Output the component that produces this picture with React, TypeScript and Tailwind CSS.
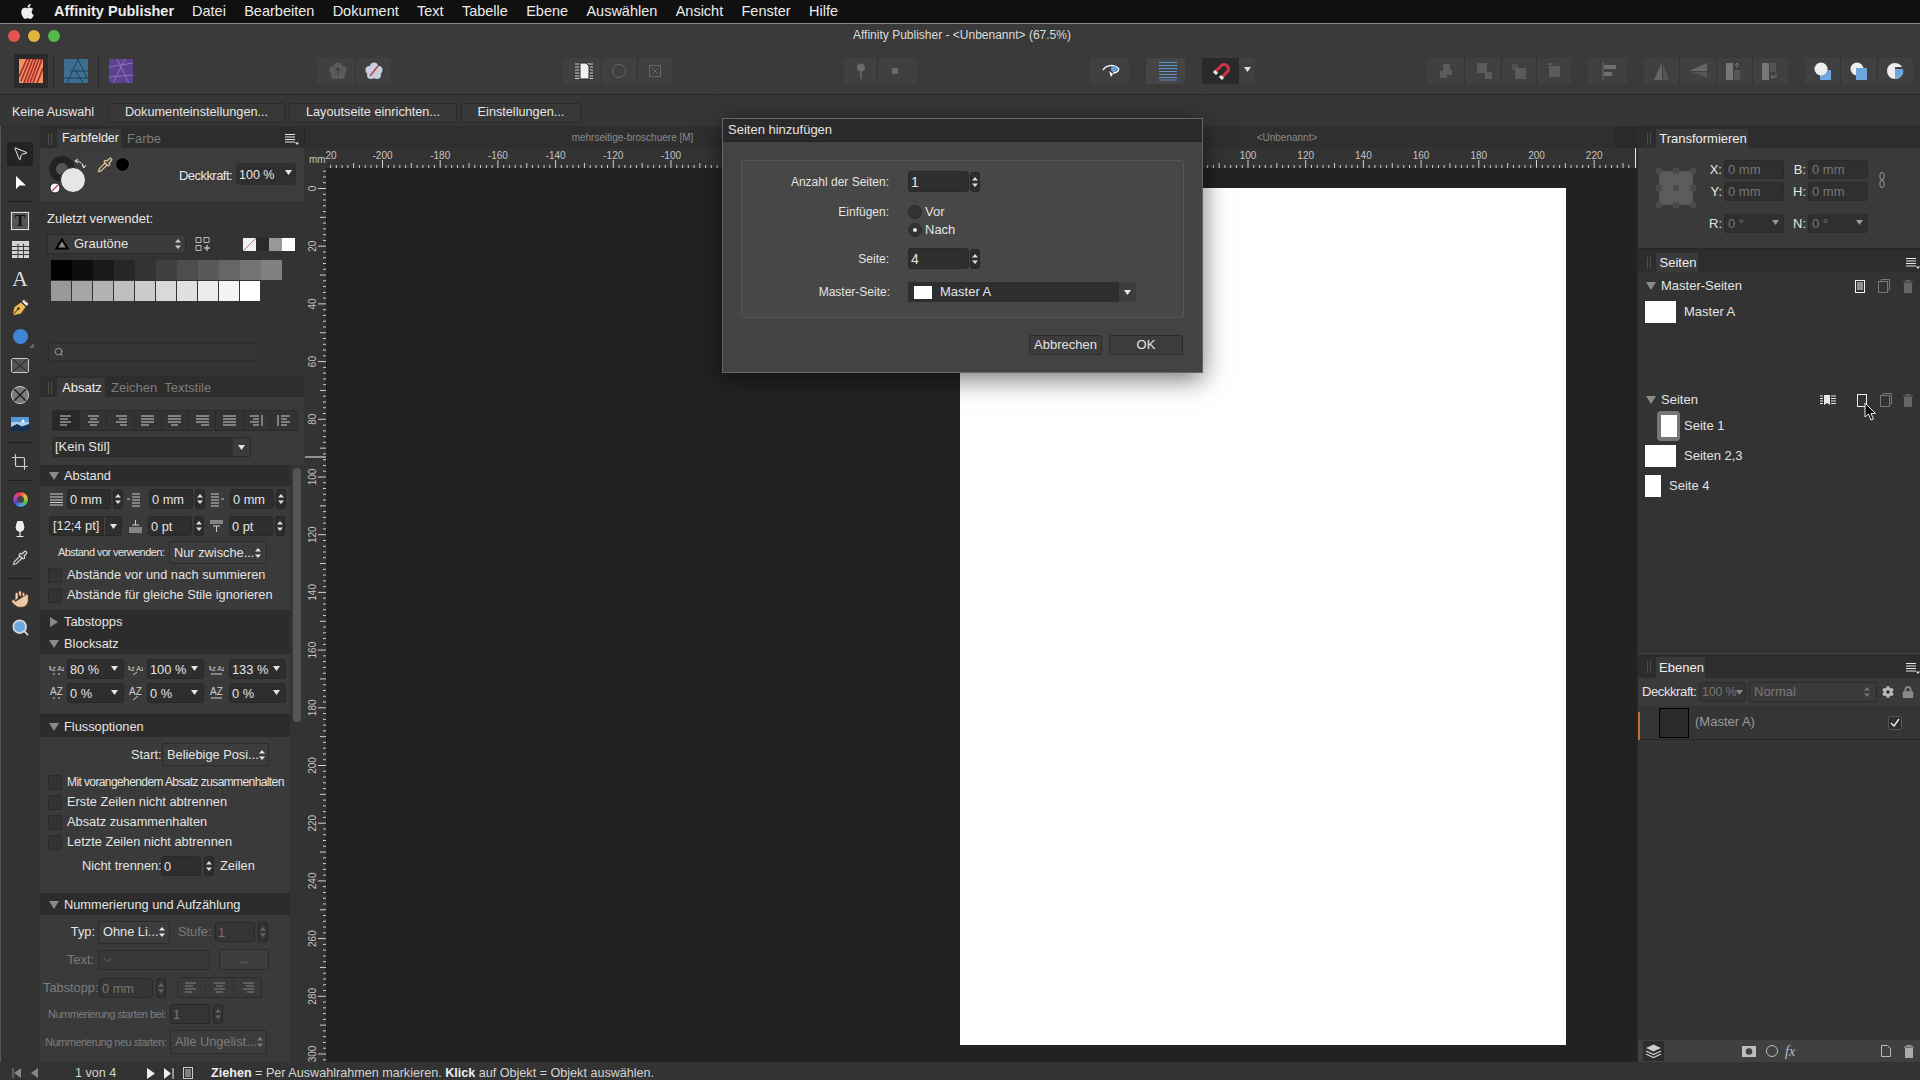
import React from "react";
import { FaApple, FaCog, FaLock } from "react-icons/fa";
import { Hand, Search, Wine, Pipette, Crop, MousePointer2 } from "lucide-react";

const Caret = ({ className = "" }: { className?: string }) => (
  <svg width="7" height="5" viewBox="0 0 7 5" className={`shrink-0 ${className}`}><path d="M0 0H7L3.5 5Z" fill="currentColor" /></svg>
);
const UpDown = ({ className = "" }: { className?: string }) => (
  <svg width="6" height="12" viewBox="0 0 6 12" className={`shrink-0 ${className}`}><path d="M0 4.5H6L3 1Z M0 7.5H6L3 11Z" fill="currentColor" /></svg>
);
const Stepper = ({ className = "", dim = false }: { className?: string; dim?: boolean }) => (
  <div className={`flex items-center justify-center w-[10px] h-[20px] rounded-[3px] bg-[#2c2c2c] border border-[#262626] shrink-0 ${dim ? "text-[#666]" : "text-[#ddd]"} ${className}`}><UpDown /></div>
);
const Field = ({ className = "", children, caret = false, dim = false }: { className?: string; children?: React.ReactNode; caret?: boolean; dim?: boolean }) => (
  <div className={`flex items-center justify-between h-[20px] rounded-[3px] bg-[#2e2e2e] border border-[#282828] pl-[2px] pr-[5px] pt-[2px] shrink-0 whitespace-nowrap ${dim ? "text-[#777]" : "text-[#e4e4e4]"} ${className}`}>
    <span>{children}</span>{caret && <Caret className="mb-[3px]" />}
  </div>
);
const Popup = ({ className = "", children, dim = false }: { className?: string; children?: React.ReactNode; dim?: boolean }) => (
  <div className={`flex items-center justify-between h-[23px] rounded-[2px] bg-[#3c3c3c] border border-[#2b2b2b] pl-[4px] pr-[5px] shrink-0 whitespace-nowrap ${dim ? "text-[#7c7c7c]" : "text-[#e4e4e4]"} ${className}`}>
    <span>{children}</span><UpDown />
  </div>
);
const Grip = ({ className = "" }: { className?: string }) => (
  <div className={`flex gap-[2px] h-[12px] shrink-0 ${className}`}><i className="block w-px bg-[#4d4d4d]" /><i className="block w-px bg-[#4d4d4d]" /></div>
);
const MenuIcon = ({ className = "" }: { className?: string }) => (
  <svg width="14" height="12" viewBox="0 0 14 12" className={`shrink-0 ${className}`}><path d="M0 1.5H10M0 4H10M0 6.5H10M0 9H10" stroke="#e8e8e8" strokeWidth="1" /><path d="M10 9.5H14L12 12Z" fill="#e8e8e8" /></svg>
);
const Head = ({ children, open = true, className = "" }: { children: React.ReactNode; open?: boolean; className?: string }) => (
  <div className={`flex items-center bg-[#2c2c2c] text-[12.8px] text-[#e4e4e4] shrink-0 ${className}`}>
    <svg width="10" height="10" viewBox="0 0 10 10" className="ml-[9px] mr-[5px] shrink-0"><path d={open ? "M0 1H10L5 9Z" : "M1 0V10L9 5Z"} fill="#8a8a8a" /></svg>
    {children}
  </div>
);
const Check = ({ children, tight = false }: { children: React.ReactNode; tight?: boolean }) => (
  <div className="flex items-center h-[20px]">
    <div className="w-[14px] h-[15px] ml-[8px] rounded-[2px] bg-[#333] border border-[#2a2a2a] shrink-0" />
    <span className={`ml-[5px] whitespace-nowrap ${tight ? "text-[12px] tracking-[-0.6px]" : "text-[12.8px]"}`}>{children}</span>
  </div>
);
const ParaIcon = ({ d, className = "" }: { d: string; className?: string }) => (
  <svg width="15" height="15" viewBox="0 0 15 15" className={`shrink-0 ${className}`}><path d={d} stroke="#cfcfcf" strokeWidth="1" fill="none" /></svg>
);
const AZ = ({ t, u, className = "" }: { t: string; u: string; className?: string }) => (
  <svg width="15" height="15" viewBox="0 0 15 15" className={`shrink-0 ${className}`}>
    <text x="7.5" y="9" textAnchor="middle" fontSize={t.length > 2 ? 7 : 10} fill="#cfcfcf" fontFamily="Liberation Sans">{t}</text>
    <path d={u} stroke="#cfcfcf" strokeWidth="1" fill="none" />
  </svg>
);

/* ---- tools ---- */
const ToolSep = ({ className = "" }: { className?: string }) => (
  <div className={`flex items-center justify-center ${className}`}><div className="w-[25px] h-px bg-[#1f1f1f]" /></div>
);
const Tool = ({ children, active = false }: { children: React.ReactNode; active?: boolean }) => (
  <div className="flex items-center justify-center h-[29px]">
    <div className={`flex items-center justify-center w-[26px] h-[24px] rounded-[3px] ${active ? "bg-[#232323]" : ""}`}>{children}</div>
  </div>
);

const Tools = () => (
  <div className="w-[40px] shrink-0 bg-[#333] pt-[13px] pr-[1px] flex flex-col border-l border-[#555]">
    <Tool active><MousePointer2 size={17} color="#e8e8e8" strokeWidth={1.4} fill="#2a2a2a" /></Tool>
    <Tool><svg width="13" height="16" viewBox="0 0 13 16"><path d="M2 1V14L5.5 10.5H12Z" fill="#fff" /></svg></Tool>
    <ToolSep className="h-[9px]" />
    <Tool><div className="w-[18px] h-[18px] border border-[#ddd] bg-[#555] flex items-center justify-center text-[16px] leading-none text-[#111] font-bold font-['Liberation_Serif',serif] outline outline-1 outline-[#444]">T</div></Tool>
    <Tool><svg width="17" height="17" viewBox="0 0 17 17"><rect x="0.5" y="0.5" width="16" height="16" fill="#cfcfcf" stroke="#ddd" /><path d="M0 5.5H17M0 9.500H17M0 13.500H17M6 3V17M11.500 3V17" stroke="#3a3a3a" /></svg></Tool>
    <Tool><span className="font-['Liberation_Serif',serif] text-[22px] leading-none text-[#ddd]">A</span></Tool>
    <Tool><svg width="20" height="20" viewBox="0 0 20 20"><path d="M2 18L4 9L11 4L16 9L11 16Z" fill="#e8b95c" stroke="#3a2a10" strokeWidth="0.800" /><path d="M2 18L8 11" stroke="#3a2a10" /><circle cx="8.500" cy="10.500" r="1.300" fill="#3a2a10" /><path d="M12 3.500L14 1.500L18.500 6L16.500 8Z" fill="#eee" /><path d="M14.500 2.500L16 4M16 1.500L17.500 3" stroke="#c23a4c" /></svg></Tool>
    <Tool>
      <div className="relative w-[22px] h-[22px] flex items-center justify-center">
        <div className="w-[15px] h-[15px] rounded-full bg-[#3f86d6]" />
        <svg width="5" height="5" viewBox="0 0 5 5" className="absolute right-[-3px] bottom-[0px]"><path d="M5 0V5H0Z" fill="#666" /></svg>
      </div>
    </Tool>
    <Tool><svg width="18" height="15" viewBox="0 0 18 15"><rect x="0.5" y="0.5" width="17" height="14" fill="#555" stroke="#ccc" /><path d="M0 0L18 15M18 0L0 15" stroke="#222" /></svg></Tool>
    <Tool><svg width="18" height="18" viewBox="0 0 18 18"><circle cx="9" cy="9" r="8.5" fill="#777" stroke="#ccc" /><path d="M3 3L15 15M15 3L3 15" stroke="#1d1d1d" strokeWidth="1.4" /></svg></Tool>
    <Tool><svg width="18" height="14" viewBox="0 0 18 14"><rect width="18" height="14" fill="#a8cdf0" /><rect width="18" height="5" fill="#5a97d8" /><path d="M0 10L6 7L11 9.500L18 7V14H0Z" fill="#17304f" /><circle cx="12" cy="4" r="1.500" fill="#fff" /></svg></Tool>
    <ToolSep className="h-[9px]" />
    <Tool><Crop size={18} color="#cfcfcf" strokeWidth={1.6} /></Tool>
    <ToolSep className="h-[9px]" />
    <Tool><div className="w-[17px] h-[17px] rounded-full bg-[conic-gradient(#e84040,#e8c040,#50c050,#40a0e0,#6040d0,#d040a0,#e84040)] border border-[#222] flex items-center justify-center"><i className="block w-[7px] h-[7px] rounded-full bg-[#444]" /></div></Tool>
    <Tool><Wine size={18} color="#ededed" fill="#ededed" strokeWidth={1.5} /></Tool>
    <Tool><Pipette size={16} color="#d5d5d5" strokeWidth={1.8} /></Tool>
    <ToolSep className="h-[12px]" />
    <Tool><Hand size={20} color="#4a3526" fill="#eec7a4" strokeWidth={1.2} /></Tool>
    <Tool><Search size={19} color="#d9d9d9" fill="#6aa8e0" strokeWidth={2.2} /></Tool>
  </div>
);

/* ---- left panel ---- */
const R1 = ["bg-[#000000]", "bg-[#0d0d0d]", "bg-[#1a1a1a]", "bg-[#262626]", "bg-[#333333]", "bg-[#404040]", "bg-[#4d4d4d]", "bg-[#595959]", "bg-[#666666]", "bg-[#737373]", "bg-[#808080]"];
const R2 = ["bg-[#999999]", "bg-[#a6a6a6]", "bg-[#b3b3b3]", "bg-[#bfbfbf]", "bg-[#cccccc]", "bg-[#d9d9d9]", "bg-[#e0e0e0]", "bg-[#ececec]", "bg-[#f4f4f4]", "bg-[#ffffff]"];

const AL = [
  "M1 3H12M1 6H9M1 9H12M1 12H8", "M2 3H13M4 6H11M2 9H13M4 12H11", "M3 3H14M6 6H14M3 9H14M7 12H14",
  "M1 3H14M1 6H14M1 9H14M1 12H9", "M1 3H14M1 6H14M1 9H14M4 12H11", "M1 3H14M1 6H14M1 9H14M6 12H14",
  "M1 3H14M1 6H14M1 9H14M1 12H14", "M1 3H10M4 6H10M1 9H10M4 12H10M13 2V13", "M5 3H14M5 6H11M5 9H14M5 12H11M2 2V13",
];

const LeftPanel = () => (
  <div className="w-[264px] shrink-0 flex flex-col bg-[#333]">
    <div className="h-[22px] pt-[3px] flex items-stretch bg-[#2d2d2d] text-[12.5px]">
      <Grip className="ml-[8px] mt-[4px]" />
      <div className="ml-[5px] w-[64px] pl-[3px] bg-[#3a3a3a] flex items-center justify-center text-[#eee]">Farbfelder</div>
      <div className="ml-[6px] flex items-center text-[#7c7c7c] text-[13px]">Farbe</div>
      <div className="flex-1 flex items-center justify-end pr-[5px]"><MenuIcon /></div>
    </div>
    <div className="h-[53px] bg-[#3c3c3c] flex items-start">
      <svg width="50" height="48" viewBox="0 0 50 48" className="ml-[8px] mt-[4px] shrink-0">
        <circle cx="14" cy="17" r="13" fill="#232323" /><circle cx="14" cy="17" r="6" fill="#555" />
        <circle cx="25" cy="28" r="12.5" fill="#e5e6e8" stroke="#2a2a2a" />
        <circle cx="7" cy="36" r="5" fill="#fff" stroke="#222" /><path d="M4 39L10 33" stroke="#c23a4c" strokeWidth="1.3" />
        <path d="M27 9A8 8 0 0 1 36 16M27 9l3-2M27 9l3 2M36 16l-2-3M36 16l2-3" stroke="#ddd" strokeWidth="1" fill="none" />
      </svg>
      <Pipette size={16} color="#d8c09a" strokeWidth={2} className="ml-[-1px] mt-[9px] shrink-0" />
      <div className="ml-[2px] mt-[9px] w-[15px] h-[15px] rounded-full bg-black border border-[#555] shrink-0" />
      <div className="ml-[49px] mt-[18px] text-[13px] tracking-[-0.55px] text-[#e8e8e8] w-[52px] whitespace-nowrap">Deckkraft:</div>
      <div className="ml-[5px] mt-[15px] w-[60px] h-[22px] rounded-[3px] bg-[#2f2f2f] flex items-center justify-between pl-[3px] pr-[4px] pt-[2px] text-[12.5px] text-[#e8e8e8]"><span>100 %</span><Caret className="mb-[6px]" /></div>
    </div>
    <div className="h-[175px] flex flex-col">
      <div className="ml-[7px] mt-[10px] h-[16px] leading-[16px] text-[13px] text-[#e6e6e6]">Zuletzt verwendet:</div>
      <div className="mt-[7px] flex items-center h-[20px]">
        <div className="ml-[7px] w-[139px] h-[20px] rounded-[2px] bg-[#3b3b3b] border border-[#2b2b2b] flex items-center justify-between pr-[4px]">
          <svg width="14" height="12" viewBox="0 0 14 12" className="ml-[7px]"><path d="M7 1.5L12.5 10.5H1.5Z" fill="#888" stroke="#000" strokeWidth="2" /></svg>
          <span className="ml-[5px] flex-1 text-[13px] text-[#e4e4e4]">Grautöne</span>
          <UpDown className="text-[#ccc]" />
        </div>
        <svg width="16" height="16" viewBox="0 0 16 16" className="ml-[9px]"><path d="M1 1.5H6V6.5H1Z M9 1.5H14V6.5H9Z M1 9.5H6V14.5H1Z" fill="none" stroke="#bbb" /><path d="M9 12H15M12 9V15" stroke="#bbb" strokeWidth="1.4" /></svg>
        <div className="ml-[32px] flex h-[13px]">
          <svg width="13" height="13" viewBox="0 0 13 13"><rect width="13" height="13" fill="#f2f2f2" /><path d="M0 13L13 0" stroke="#c86a80" /></svg>
          <div className="w-[13px] bg-[#2a2a2a]" /><div className="w-[13px] bg-[#999]" /><div className="w-[13px] bg-white" />
        </div>
      </div>
      <div className="ml-[11px] mt-[6px] flex flex-col gap-px">
        <div className="flex">{R1.map((c, i) => <div key={i} className={`w-[21px] h-[20px] ${c}`} />)}</div>
        <div className="flex gap-px">{R2.map((c, i) => <div key={i} className={`w-[20px] h-[20px] ${c}`} />)}</div>
      </div>
      <div className="ml-[8px] mt-[42px] w-[210px] h-[18px] bg-[#363636] border border-[#2c2c2c] rounded-[2px] flex items-center pl-[5px]"><Search size={10} color="#aaa" /></div>
    </div>
    <div className="h-[21px] pt-[2px] flex items-stretch bg-[#2d2d2d] text-[13px]">
      <Grip className="ml-[8px] mt-[4px]" />
      <div className="ml-[5px] w-[48px] pl-[2px] bg-[#3a3a3a] flex items-center justify-center text-[#eee]">Absatz</div>
      <div className="ml-[6px] flex items-center text-[#7c7c7c]">Zeichen</div>
      <div className="ml-[7px] flex items-center text-[#7c7c7c]">Textstile</div>
    </div>
    <div className="h-[68px] bg-[#3a3a3a] pt-[13px] pl-[12px] flex flex-col gap-[6px]">
      <div className="flex h-[21px] w-[246px] rounded-[2px] border border-[#2c2c2c] bg-[#333]">
        {AL.map((d, i) => <div key={i} className={`flex-1 flex items-center justify-center ${i < 8 ? "border-r border-[#2a2a2a]" : ""} ${i === 0 ? "bg-[#282828]" : ""}`}><ParaIcon d={d} /></div>)}
      </div>
      <div className="flex items-center justify-between w-[199px] h-[20px] rounded-[2px] bg-[#2e2e2e] border border-[#292929] text-[13px] text-[#e4e4e4]">
        <span className="ml-[2px]">[Kein Stil]</span>
        <div className="w-[17px] h-full bg-[#3b3b3b] flex items-center justify-center"><Caret /></div>
      </div>
    </div>
    <div className="flex-1 flex min-h-0">
      <div className="w-[250px] shrink-0 flex flex-col text-[12.8px] text-[#e4e4e4]">
        <Head className="h-[21px]">Abstand</Head>
        <div className="h-[124px] bg-[#3a3a3a] pt-[3px] flex flex-col">
          <div className="flex items-center h-[20px]">
            <ParaIcon className="ml-[9px]" d="M1 2H14M1 5H14M1 8H14M1 10.500H14M1 13H14" />
            <Field className="ml-[3px] w-[44px]">0 mm</Field><Stepper className="ml-[2px]" />
            <ParaIcon className="ml-[3px]" d="M1 7H4M6 2H14M6 5H14M6 8H14M6 11H14M6 14H14" />
            <Field className="ml-[8px] w-[44px]">0 mm</Field><Stepper className="ml-[2px]" />
            <ParaIcon className="ml-[5px]" d="M1 2H9M1 5H9M1 8H9M1 11H9M1 14H9M11 7H14" />
            <Field className="ml-[5px] w-[44px]">0 mm</Field><Stepper className="ml-[2px]" />
          </div>
          <div className="flex items-center h-[20px] mt-[7px]">
            <div className="ml-[9px] w-[73px] h-[20px] rounded-[3px] bg-[#2e2e2e] border border-[#282828] flex items-center justify-between"><span className="ml-[3px]">[12;4 pt]</span><div className="w-[17px] h-full border-l border-[#444] flex items-center justify-center"><Caret /></div></div>
            <ParaIcon className="ml-[6px]" d="M7.500 1V6M4 6H11M1 9H14M1 11H14M1 13H14" />
            <Field className="ml-[5px] w-[44px]">0 pt</Field><Stepper className="ml-[2px]" />
            <ParaIcon className="ml-[5px]" d="M1 2H14M1 4H14M4 7H11M7.500 7V13" />
            <Field className="ml-[5px] w-[44px]">0 pt</Field><Stepper className="ml-[2px]" />
          </div>
          <div className="flex items-center h-[23px] mt-[5px]">
            <span className="ml-[18px] w-[106px] text-[11px] tracking-[-0.56px] whitespace-nowrap">Abstand vor verwenden:</span>
            <Popup className="ml-[5px] w-[98px]">Nur zwische...</Popup>
          </div>
          <div className="mt-[1px]"><Check>Abstände vor und nach summieren</Check><Check>Abstände für gleiche Stile ignorieren</Check></div>
        </div>
        <Head open={false} className="h-[23px]">Tabstopps</Head>
        <Head className="h-[21px]">Blocksatz</Head>
        <div className="h-[60px] bg-[#3a3a3a] pt-[5px] flex flex-col gap-[4px]">
          <div className="flex items-center">
            <AZ className="ml-[9px]" t="Az Az" u="M4 12H6M9 12H11" /><Field caret className="ml-[3px] w-[57px]">80 %</Field>
            <AZ className="ml-[4px]" t="Az Az" u="M5 13L9 10" /><Field caret className="ml-[4px] w-[57px]">100 %</Field>
            <AZ className="ml-[5px]" t="Az Az" u="M2 12H13" /><Field caret className="ml-[5px] w-[57px]">133 %</Field>
          </div>
          <div className="flex items-center">
            <AZ className="ml-[9px]" t="AZ" u="M4 12H6M9 12H11" /><Field caret className="ml-[3px] w-[57px]">0 %</Field>
            <AZ className="ml-[4px]" t="AZ" u="M5 14L10 10" /><Field caret className="ml-[4px] w-[57px]">0 %</Field>
            <AZ className="ml-[5px]" t="AZ" u="M2 12H13" /><Field caret className="ml-[5px] w-[57px]">0 %</Field>
          </div>
        </div>
        <Head className="h-[23px] border-t border-[#262626] pt-[1px]">Flussoptionen</Head>
        <div className="h-[156px] bg-[#3a3a3a] pt-[6px] flex flex-col">
          <div className="flex items-center h-[23px]">
            <span className="ml-[91px] w-[28px]">Start:</span>
            <Popup className="ml-[3px] w-[107px] h-[23px]">Beliebige Posi...</Popup>
          </div>
          <div className="mt-[6px]">
            <Check tight>Mit vorangehendem Absatz zusammenhalten</Check>
            <Check>Erste Zeilen nicht abtrennen</Check>
            <Check>Absatz zusammenhalten</Check>
            <Check>Letzte Zeilen nicht abtrennen</Check>
          </div>
          <div className="flex items-center mt-[4px] h-[20px]">
            <span className="ml-[42px] w-[79px] whitespace-nowrap">Nicht trennen:</span>
            <Field className="w-[40px]">0</Field><Stepper className="ml-[3px]" />
            <span className="ml-[6px]">Zeilen</span>
          </div>
        </div>
        <Head className="h-[22px] pt-[1px]">Nummerierung und Aufzählung</Head>
        <div className="flex-1 bg-[#3a3a3a] pt-[6px] flex flex-col text-[#7c7c7c]">
          <div className="flex items-center h-[22px]">
            <span className="ml-[30px] w-[25px] text-right text-[#e4e4e4]">Typ:</span>
            <Popup className="ml-[3px] w-[72px] h-[22px]">Ohne Li...</Popup>
            <span className="ml-[8px] w-[32px]">Stufe:</span>
            <Field dim className="ml-[5px] w-[40px] bg-[#343434]">1</Field><Stepper dim className="ml-[3px] bg-[#343434]" />
          </div>
          <div className="flex items-center h-[21px] mt-[6px]">
            <span className="ml-[14px] w-[40px] text-right">Text:</span>
            <div className="ml-[4px] w-[112px] h-[20px] border border-[#2b2b2b] rounded-[2px] bg-[#383838] flex items-center pl-[4px] text-[#666]"><svg width="9" height="6" viewBox="0 0 9 6"><path d="M1 1L4.500 5L8 1" fill="none" stroke="#666" /></svg></div>
            <div className="ml-[9px] w-[50px] h-[21px] border border-[#2b2b2b] rounded-[2px] bg-[#3d3d3d] flex items-center justify-center text-[11px]">...</div>
          </div>
          <div className="flex items-center h-[21px] mt-[7px]">
            <span className="ml-[3px] w-[54px] whitespace-nowrap">Tabstopp:</span>
            <Field dim className="ml-[2px] w-[54px] bg-[#343434]">0 mm</Field><Stepper dim className="ml-[3px] bg-[#343434]" />
            <div className="ml-[11px] flex w-[85px] h-[21px] border border-[#2b2b2b] rounded-[2px] bg-[#393939]">
              {[AL[0], AL[1], AL[2]].map((d, i) => <div key={i} className={`flex-1 flex items-center justify-center opacity-50 ${i < 2 ? "border-r border-[#2b2b2b]" : ""}`}><ParaIcon d={d} /></div>)}
            </div>
          </div>
          <div className="flex items-center h-[20px] mt-[6px]">
            <span className="ml-[8px] w-[116px] text-[11px] tracking-[-0.5px] whitespace-nowrap">Nummerierung starten bei:</span>
            <Field dim className="ml-[6px] w-[40px] bg-[#343434]">1</Field><Stepper dim className="ml-[3px] bg-[#343434]" />
          </div>
          <div className="flex items-center h-[24px] mt-[6px]">
            <span className="ml-[5px] w-[119px] text-[11px] tracking-[-0.5px] whitespace-nowrap">Nummerierung neu starten:</span>
            <Popup dim className="ml-[6px] w-[97px] h-[24px]">Alle Ungelist...</Popup>
          </div>
        </div>
      </div>
      <div className="flex-1 pl-[3px] pr-[3px] pt-[3px]"><div className="w-[8px] h-[254px] rounded-[4px] bg-[#555]" /></div>
    </div>
  </div>
);

/* ---- canvas ---- */
const mmX = (v: number) => 959.5 + v * 2.885 - 304;
const mmY = (v: number) => 188.5 + v * 2.885 - 168;
const xs: number[] = []; for (let v = -220; v <= 232; v += 2) xs.push(v);
const ys: number[] = []; for (let v = -6; v <= 302; v += 2) ys.push(v);

const Center = () => (
  <div className="flex-1 min-w-0 flex flex-col">
    <div className="h-[22px] flex bg-[#2f2f2f] text-[10px] text-[#8a8a8a] border-l border-[#262626]">
      <div className="w-[655px] flex items-center justify-center">mehrseitige-broschuere [M]</div>
      <div className="w-[654px] flex items-center justify-center">&lt;Unbenannt&gt;</div>
      <div className="flex-1 bg-[#2a2a2a]" />
    </div>
    <div className="h-[20px] bg-[#333] shrink-0">
      <svg width="1333" height="20" viewBox="0 0 1333 20" className="block" fontFamily="Liberation Sans" fontSize="10" fill="#c4c4c4">
        <text x="5" y="15">mm</text>
        <text x="27" y="11" textAnchor="middle" fontSize="10">20</text>
        {xs.filter((v) => v % 20 === 0 && v > -220).map((v) => <text key={v} x={mmX(v)} y="11" textAnchor="middle">{v}</text>)}
        {xs.filter((v) => mmX(v) > 21).map((v) => (
          <line key={v} x1={mmX(v)} x2={mmX(v)} y1={v % 20 === 0 ? 12 : v % 10 === 0 ? 15 : 17} y2="20" stroke="#cfcfcf" strokeWidth="1" />
        ))}
        <line x1="1331.500" x2="1331.500" y1="0" y2="20" stroke="#e8e8e8" />
      </svg>
    </div>
    <div className="flex-1 flex min-h-0">
      <div className="w-[22px] shrink-0 bg-[#333]">
        <svg width="22" height="894" viewBox="0 0 22 894" className="block" fontFamily="Liberation Sans" fontSize="10" fill="#c4c4c4">
          {ys.filter((v) => v % 20 === 0).map((v) => <text key={v} x="0" y="0" textAnchor="middle" transform={`translate(12 ${mmY(v)}) rotate(-90)`}>{v}</text>)}
          {ys.map((v) => <line key={v} x1={v % 20 === 0 ? 14 : v % 10 === 0 ? 16 : 19} x2="22" y1={mmY(v)} y2={mmY(v)} stroke="#cfcfcf" />)}
          <line x1="1" x2="22" y1="289" y2="289" stroke="#f2f2f2" />
        </svg>
      </div>
      <div className="flex-1 bg-[#222] pl-[634px] pt-[20px] overflow-hidden">
        <div className="w-[606px] h-[857px] bg-white" />
      </div>
    </div>
  </div>
);

/* ---- right panel ---- */
const Lbl = ({ children, className = "" }: { children: React.ReactNode; className?: string }) => (
  <span className={`text-[13px] text-[#e4e4e4] text-right shrink-0 ${className}`}>{children}</span>
);
const DF = ({ children, caret = false }: { children: React.ReactNode; caret?: boolean }) => (
  <div className="flex items-center justify-between w-[60px] h-[19px] rounded-[3px] bg-[#2f2f2f] border border-[#2a2a2a] pl-[3px] pr-[4px] text-[13px] text-[#777]">
    <span>{children}</span>{caret && <Caret className="text-[#999] mb-[3px]" />}
  </div>
);
const PageNew = ({ className = "" }: { className?: string }) => (
  <svg width="10" height="13" viewBox="0 0 10 13" className={`shrink-0 ${className}`}><rect x="0.5" y="0.5" width="9" height="12" fill="none" stroke="#eee" /></svg>
);
const Dup = () => (
  <svg width="12" height="14" viewBox="0 0 12 14" className="shrink-0"><path d="M3 2.500V0.500H11.500V11H9.500" fill="none" stroke="#777" /><rect x="0.500" y="2.500" width="9" height="11" fill="none" stroke="#777" /></svg>
);
const Trash = ({ c = "#666" }: { c?: string }) => (
  <svg width="10" height="13" viewBox="0 0 10 13" className="shrink-0"><path d="M0 2H10" stroke={c} /><path d="M3 2V0.500H7V2" fill="none" stroke={c} /><path d="M1 3H9V13H1Z" fill={c} /></svg>
);

const RightPanel = () => (
  <div className="w-[283px] shrink-0 bg-[#333] flex flex-col border-l border-[#2a2a2a]">
    <div className="h-[22px] pt-[3px] flex items-stretch bg-[#2d2d2d] text-[13px]">
      <Grip className="ml-[9px] mt-[4px]" />
      <div className="ml-[5px] w-[92px] pl-[2px] bg-[#3a3a3a] flex items-center justify-center text-[#eee]">Transformieren</div>
    </div>
    <div className="h-[100px] bg-[#3a3a3a] flex shrink-0">
      <svg width="40" height="40" viewBox="0 0 40 40" className="ml-[18px] mt-[20px] shrink-0">
        <rect x="3" y="3" width="34" height="34" fill="#5c5c5c" />
        <g fill="#4b4b4b"><rect width="6" height="6" /><rect x="17" width="6" height="6" /><rect x="34" width="6" height="6" /><rect y="17" width="6" height="6" /><rect x="17" y="17" width="6" height="6" /><rect x="34" y="17" width="6" height="6" /><rect y="34" width="6" height="6" /><rect x="17" y="34" width="6" height="6" /><rect x="34" y="34" width="6" height="6" /></g>
      </svg>
      <div className="flex flex-col ml-[7px] pt-[12px]">
        <div className="flex items-center h-[19px]"><Lbl className="w-[19px]">X:</Lbl><div className="ml-[2px]"><DF>0 mm</DF></div><Lbl className="w-[22px]">B:</Lbl><div className="ml-[2px]"><DF>0 mm</DF></div></div>
        <div className="flex items-center h-[19px] mt-[3px]"><Lbl className="w-[19px]">Y:</Lbl><div className="ml-[2px]"><DF>0 mm</DF></div><Lbl className="w-[22px]">H:</Lbl><div className="ml-[2px]"><DF>0 mm</DF></div></div>
        <div className="flex items-center h-[19px] mt-[13px]"><Lbl className="w-[19px]">R:</Lbl><div className="ml-[2px]"><DF caret>0 °</DF></div><Lbl className="w-[22px]">N:</Lbl><div className="ml-[2px]"><DF caret>0 °</DF></div></div>
      </div>
      <svg width="6" height="16" viewBox="0 0 6 16" className="ml-[11px] mt-[24px] shrink-0"><rect x="1" y="0.500" width="4" height="7" rx="2" fill="none" stroke="#999" /><rect x="1" y="8.500" width="4" height="7" rx="2" fill="none" stroke="#999" /></svg>
    </div>
    <div className="h-[24px] pt-[4px] flex items-stretch bg-[#2d2d2d] text-[13px] border-t border-[#262626] shrink-0">
      <Grip className="ml-[9px] mt-[4px]" />
      <div className="ml-[5px] w-[42px] pl-[2px] bg-[#3a3a3a] flex items-center justify-center text-[#eee]">Seiten</div>
      <div className="flex-1 flex items-center justify-end"><MenuIcon /></div>
    </div>
    <div className="h-[382px] relative flex flex-col text-[13px] text-[#e4e4e4] border-b border-[#444] shrink-0">
      <div className="flex items-center h-[26px] mt-[1px]">
        <svg width="10" height="10" viewBox="0 0 10 10" className="ml-[8px] mr-[5px]"><path d="M0 1H10L5 9Z" fill="#8a8a8a" /></svg>
        <span>Master-Seiten</span>
        <div className="ml-auto mr-[7px] flex items-center gap-[13px]">
          <svg width="10" height="13" viewBox="0 0 10 13"><rect x="0.500" y="0.500" width="9" height="12" fill="none" stroke="#eee" /><path d="M2 3H8M2 5H8M2 7H8M2 9H8" stroke="#eee" /></svg>
          <Dup /><Trash />
        </div>
      </div>
      <div className="flex items-center h-[22px] mt-[2px] ml-[7px]"><div className="w-[31px] h-[22px] bg-white" /><span className="ml-[8px]">Master A</span></div>
      <div className="flex items-center h-[24px] mt-[65px]">
        <svg width="10" height="10" viewBox="0 0 10 10" className="ml-[8px] mr-[5px]"><path d="M0 1H10L5 9Z" fill="#8a8a8a" /></svg>
        <span>Seiten</span>
        <svg width="16" height="11" viewBox="0 0 16 11" className="ml-[122px]"><path d="M0 1H3M0 3.500H3M0 6H3M0 8.500H3M11 1H16M11 3.500H16M11 6H16M11 8.500H16" stroke="#e8e8e8" /><path d="M4 0H10V10L7 8L4 10Z" fill="#e8e8e8" /></svg>
        <PageNew className="ml-[21px]" />
        <div className="ml-[13px]"><Dup /></div>
        <div className="ml-[11px]"><Trash /></div>
      </div>
      <div className="flex items-center h-[30px] mt-[-1px]">
        <div className="ml-[19px] w-[23px] h-[30px] rounded-[4px] bg-[#777] flex items-center justify-center"><div className="w-[16px] h-[22px] bg-white" /></div>
        <span className="ml-[4px]">Seite 1</span>
      </div>
      <div className="flex items-center h-[22px] mt-[4px] ml-[7px]"><div className="w-[31px] h-[22px] bg-white" /><span className="ml-[8px]">Seiten 2,3</span></div>
      <div className="flex items-center h-[22px] mt-[8px] ml-[7px]"><div className="w-[16px] h-[22px] bg-white" /><span className="ml-[8px]">Seite 4</span></div>
      <svg width="14" height="20" viewBox="0 0 14 20" className="absolute left-[226px] top-[130px]"><path d="M1 1V15L4.500 12L7 18L9.500 17L7 11.500H11.500Z" fill="#111" stroke="#eee" strokeWidth="1" /></svg>
    </div>
    <div className="h-[24px] pt-[3px] flex items-stretch bg-[#2d2d2d] text-[13px] shrink-0">
      <Grip className="ml-[9px] mt-[4px]" />
      <div className="ml-[5px] w-[49px] pl-[2px] bg-[#3a3a3a] flex items-center justify-center text-[#eee]">Ebenen</div>
      <div className="flex-1 flex items-center justify-end"><MenuIcon /></div>
    </div>
    <div className="h-[28px] bg-[#3a3a3a] flex items-center text-[13px] shrink-0">
      <span className="ml-[4px] w-[56px] tracking-[-0.4px] text-[#e4e4e4] shrink-0">Deckkraft:</span>
      <div className="ml-[1px] w-[47px] h-[20px] rounded-[3px] bg-[#353535] border border-[#2b2b2b] flex items-center justify-between pl-[2px] pr-[3px] text-[#777] overflow-hidden whitespace-nowrap"><span className="text-[12.5px] tracking-[-0.2px]">100 %</span><Caret className="text-[#888]" /></div>
      <div className="ml-[3px] w-[128px] h-[20px] rounded-[2px] bg-[#3b3b3b] border border-[#2b2b2b] flex items-center justify-between pl-[4px] pr-[6px] text-[#777]"><span>Normal</span><UpDown /></div>
      <FaCog size={12} color="#bbb" className="ml-[5px]" />
      <FaLock size={12} color="#8a8a8a" className="ml-[8px]" />
    </div>
    <div className="h-[34px] flex items-center border-b border-[#262626] shrink-0 bg-[#353535] relative">
      <div className="absolute left-0 top-[6px] w-[2px] h-[28px] bg-[#c96a35]" />
      <div className="ml-[21px] w-[30px] h-[30px] bg-[#2a2a2a] border border-black" />
      <span className="ml-[6px] mb-[2px] text-[13px] text-[#9a9a9a]">(Master A)</span>
      <div className="ml-auto mr-[18px] w-[14px] h-[14px] rounded-[2px] bg-[#2d2d2d] border border-[#555] flex items-center justify-center"><svg width="10" height="9" viewBox="0 0 10 9"><path d="M1 5L4 8L9 1" fill="none" stroke="#eee" strokeWidth="1.4" /></svg></div>
    </div>
    <div className="flex-1" />
    <div className="h-[22px] bg-[#404040] flex items-center shrink-0">
      <div className="ml-[5px] w-[21px] h-[20px] bg-[#2d2d2d] flex items-center justify-center">
        <svg width="17" height="14" viewBox="0 0 17 14"><path d="M8.500 0.500L16 4L8.500 7.500L1 4Z" fill="#ccc" /><path d="M1 7L8.500 10.500L16 7M1 10L8.500 13.500L16 10" fill="none" stroke="#ccc" strokeWidth="1.300" /></svg>
      </div>
      <svg width="14" height="11" viewBox="0 0 14 11" className="ml-[78px]"><rect width="14" height="11" fill="#bdbdbd" /><circle cx="7" cy="5.500" r="3.300" fill="#404040" /></svg>
      <svg width="12" height="12" viewBox="0 0 12 12" className="ml-[10px]"><circle cx="6" cy="6" r="5.500" fill="#404040" stroke="#bdbdbd" /><path d="M9 1.500A5.500 5.500 0 0 0 3 10.800A5.500 5.500 0 0 1 9 1.500Z" fill="#c8c8c8" /></svg>
      <span className="ml-[7px] text-[14px] italic font-['Liberation_Serif',serif] text-[#bdbdbd]">fx</span>
      <div className="ml-auto flex items-center gap-[13px] mr-[6px]">
        <svg width="10" height="12" viewBox="0 0 10 12"><path d="M.5 .5H6.500L9.500 3.500V11.500H.5Z" fill="none" stroke="#bbb" /></svg>
        <Trash c="#aaa" />
      </div>
    </div>
  </div>
);

/* ---- top ---- */
const Cell = ({ children, last = false, className = "" }: { children?: React.ReactNode; last?: boolean; className?: string }) => (
  <div className={`flex-1 flex items-center justify-center ${last ? "" : "border-r border-[#333]"} ${className}`}>{children}</div>
);
const Grp = ({ className = "", children }: { className?: string; children: React.ReactNode }) => (
  <div className={`flex h-[26px] rounded-[2px] bg-[#404040] shrink-0 ${className}`}>{children}</div>
);
const Flower = ({ fill, children }: { fill: string; children?: React.ReactNode }) => (
  <svg width="18" height="18" viewBox="0 0 18 18">
    <g fill={fill}><circle cx="9" cy="4.500" r="4" /><circle cx="4.500" cy="8" r="4" /><circle cx="13.500" cy="8" r="4" /><circle cx="6" cy="13" r="4" /><circle cx="12" cy="13" r="4" /><circle cx="9" cy="9" r="4" /></g>
    {children}
  </svg>
);
const Bool = ({ d }: { d: React.ReactNode }) => (
  <svg width="20" height="20" viewBox="0 0 20 20">{d}</svg>
);
const dimc = "#5b5b5b";

const Toolbar = () => (
  <div className="h-[48px] flex items-center border-b border-[#2a2a2a] bg-[#3a3a3a] shrink-0">
    <div className="ml-[14px] w-[34px] h-[34px] bg-[#2a2a2a] flex items-center justify-center shrink-0">
      <svg width="24" height="24" viewBox="0 0 24 24"><rect width="24" height="24" fill="#f0915f" /><path d="M0 18L8 0H11L2 22M5 24L14 0H17L8 24M11 24L20 0H23L14 24M18 24L24 9" stroke="#a82a2a" strokeWidth="1.600" fill="none" /></svg>
    </div>
    <div className="ml-[5px] w-px h-[34px] bg-[#2a2a2a]" />
    <svg width="24" height="24" viewBox="0 0 24 24" className="ml-[10px] shrink-0"><rect width="24" height="24" fill="#3f6f90" /><path d="M0 19H24M14 0L3 24M14 0L23 19M7 12H24M12 12L19 24" stroke="#1f3f58" strokeWidth="1" fill="none" /></svg>
    <div className="ml-[10px] w-px h-[34px] bg-[#2a2a2a]" />
    <svg width="24" height="24" viewBox="0 0 24 24" className="ml-[10px] shrink-0"><rect width="24" height="24" fill="#5d4290" /><path d="M8 0L20 24M0 8L24 4M16 0L4 24M0 18L24 16" stroke="#8f72c0" strokeWidth="1" fill="none" /></svg>
    <Grp className="ml-[184px] w-[74px]">
      <Cell className="pl-[3px]"><Flower fill={dimc}><path d="M9 13V6M6.500 8.500L9 6L11.500 8.500" stroke="#333" fill="none" /></Flower></Cell>
      <Cell last><Flower fill="#c5cfe0"><path d="M5 14L13 4" stroke="#d23a3a" strokeWidth="1.500" /></Flower></Cell>
    </Grp>
    <Grp className="ml-[172px] w-[109px]">
      <Cell className="pl-[4px]"><svg width="18" height="18" viewBox="0 0 18 18"><path d="M0 2H18M0 5H18M0 8H18M0 11H18M0 14H18M0 16.500H18" stroke="#ccc" /><path d="M5 1H11L14 4V17H5Z" fill="#f0f0f0" stroke="#222" /></svg></Cell>
      <Cell><svg width="14" height="14" viewBox="0 0 14 14"><circle cx="7" cy="7" r="6.500" fill="none" stroke="#666" /></svg></Cell>
      <Cell last><svg width="12" height="12" viewBox="0 0 12 12"><rect x="0.500" y="0.500" width="11" height="11" fill="none" stroke="#666" /><path d="M3 3L9 9M9 3L3 9" stroke="#666" /></svg></Cell>
    </Grp>
    <Grp className="ml-[172px] w-[73px]">
      <Cell><svg width="10" height="16" viewBox="0 0 10 16"><circle cx="5" cy="4.500" r="4" fill="#6a6a6a" /><rect x="4.300" y="7" width="1.400" height="9" fill="#6a6a6a" /></svg></Cell>
      <Cell last className="pr-[6px]"><div className="w-[6px] h-[6px] bg-[#6a6a6a]" /></Cell>
    </Grp>
    <Grp className="ml-[173px] w-[39px] bg-[#292929]">
      <Cell last className="pl-[3px]"><svg width="18" height="14" viewBox="0 0 18 14"><path d="M1 6C4 1 12 0 16 4C18 6 15 9 11 9" fill="none" stroke="#fff" strokeWidth="1.500" /><path d="M7 7L9 13L11 10" fill="#fff" /><circle cx="12" cy="5" r="3" fill="#6aa0e0" /></svg></Cell>
    </Grp>
    <Grp className="ml-[17px] w-[39px] bg-[#454545]">
      <Cell last className="pl-[4px]"><svg width="20" height="20" viewBox="0 0 20 20"><path d="M1 1.500H19M1 4.500H19M1 7.500H19M1 10.500H19M1 13.500H19M1 16.500H19M1 19H19" stroke="#5f93cf" /></svg></Cell>
    </Grp>
    <Grp className="ml-[17px] w-[53px] bg-[#404040]">
      <div className="w-[37px] bg-[#292929] flex items-center justify-center rounded-l-[2px] pl-[2px]"><svg width="20" height="20" viewBox="0 0 20 20"><path d="M3 11L10 4A4.500 4.500 0 0 1 16 10L9 17" fill="none" stroke="#d1324a" strokeWidth="3" /><path d="M2 10L5 13M8 15L11 18" stroke="#eee" strokeWidth="3" /></svg></div>
      <div className="flex-1 flex items-center justify-center text-[#ddd]"><Caret className="mb-[2px]" /></div>
    </Grp>
    <Grp className="ml-[172px] w-[144px]">
      <Cell className="pl-[3px]"><Bool d={<g fill={dimc}><rect x="6" y="3" width="7" height="7" /><rect x="3" y="10" width="7" height="7" /><rect x="10" y="9" width="5" height="5" /></g>} /></Cell>
      <Cell className="pl-[2px]"><Bool d={<g fill={dimc}><rect x="3" y="2" width="10" height="10" /><rect x="11" y="11" width="7" height="7" /></g>} /></Cell>
      <Cell><Bool d={<g fill={dimc}><rect x="3" y="3" width="6" height="6" opacity="0.600" /><rect x="6" y="7" width="11" height="11" /></g>} /></Cell>
      <Cell last><Bool d={<g fill={dimc}><rect x="5" y="5" width="11" height="11" /><rect x="4" y="2" width="5" height="2" /></g>} /></Cell>
    </Grp>
    <Grp className="ml-[17px] w-[39px]">
      <Cell last className="pl-[2px]"><svg width="16" height="18" viewBox="0 0 16 18"><path d="M2 0V18" stroke="#666" /><rect x="3" y="3" width="12" height="4" fill="#6f6f6f" /><rect x="3" y="10" width="8" height="4" fill="#6f6f6f" /></svg></Cell>
    </Grp>
    <Grp className="ml-[17px] w-[144px]">
      <Cell><svg width="18" height="20" viewBox="0 0 18 20"><path d="M9 1L1 19H9Z" fill="#666" /><path d="M10 3L16 19H10Z" fill="#555" /></svg></Cell>
      <Cell><svg width="20" height="18" viewBox="0 0 20 18"><path d="M19 1L1 9H19Z" fill="#666" /><path d="M19 10V16L4 10Z" fill="#555" /></svg></Cell>
      <Cell><svg width="18" height="20" viewBox="0 0 18 20"><rect x="1" y="2" width="7" height="17" fill="#777" /><rect x="9" y="9" width="6" height="10" fill="#555" /><path d="M12 7V2M10 4L12 2L14 4" fill="none" stroke="#777" /></svg></Cell>
      <Cell last><svg width="18" height="20" viewBox="0 0 18 20"><rect x="1" y="2" width="7" height="17" fill="#777" /><rect x="9" y="2" width="6" height="9" fill="#555" /><path d="M15 12V16H10M12 14L10 16L12 18" fill="none" stroke="#777" /></svg></Cell>
    </Grp>
    <Grp className="ml-[17px] w-[108px]">
      <Cell><Bool d={<g><rect x="7" y="9" width="11" height="10" fill="#6fa6dd" /><circle cx="8" cy="8" r="6.500" fill="#eee" /></g>} /></Cell>
      <Cell><Bool d={<g><circle cx="8" cy="8" r="6.500" fill="#eee" /><rect x="7" y="7" width="11" height="12" fill="#6fa6dd" /></g>} /></Cell>
      <Cell last><Bool d={<g><circle cx="10" cy="10" r="8" fill="#eee" /><path d="M10 8H18A8 8 0 0 1 10 18Z" fill="#6fa6dd" /><path d="M10 8H18V6H10Z" fill="#404040" /></g>} /></Cell>
    </Grp>
  </div>
);

const CtxBtn = ({ className = "", children }: { className?: string; children: React.ReactNode }) => (
  <div className={`h-[20px] rounded-[2px] bg-[#383838] border border-[#2a2a2a] flex items-center justify-center text-[12.7px] text-[#e6e6e6] shrink-0 ${className}`}>{children}</div>
);

const Dialog = () => (
  <div className="absolute left-[722px] top-[118px] w-[481px] h-[255px] bg-[#434343] border border-[#666] shadow-[0_6px_24px_rgba(0,0,0,0.55)] flex flex-col text-[13px] text-[#e4e4e4]">
    <div className="h-[23px] bg-[#2a2a2a] border-b border-[#222] flex items-center pl-[5px] text-[13px] shrink-0">Seiten hinzufügen</div>
    <div className="mx-[18px] mt-[18px] h-[158px] rounded-[3px] bg-[#474747] border border-[#565656] flex flex-col shrink-0">
      <div className="flex items-center h-[21px] mt-[10px]">
        <span className="w-[147px] text-right text-[12px]">Anzahl der Seiten:</span>
        <Field className="ml-[19px] w-[61px] h-[21px] text-[14px]">1</Field><Stepper className="ml-[1px]" />
      </div>
      <div className="flex mt-[11px]">
        <span className="w-[147px] text-right leading-[18px] text-[12px]">Einfügen:</span>
        <div className="ml-[19px] flex flex-col">
          <div className="flex items-center h-[18px]"><div className="w-[14px] h-[14px] rounded-full bg-[#333] border border-[#2a2a2a]" /><span className="ml-[3px]">Vor</span></div>
          <div className="flex items-center h-[18px]"><div className="w-[14px] h-[14px] rounded-full bg-[#333] border border-[#2a2a2a] flex items-center justify-center"><i className="block w-[4px] h-[4px] rounded-full bg-[#eee]" /></div><span className="ml-[3px]">Nach</span></div>
        </div>
      </div>
      <div className="flex items-center h-[21px] mt-[9px]">
        <span className="w-[147px] text-right text-[12px]">Seite:</span>
        <Field className="ml-[19px] w-[61px] h-[21px] text-[14px]">4</Field><Stepper className="ml-[1px]" />
      </div>
      <div className="flex items-center h-[20px] mt-[13px]">
        <span className="w-[148px] text-right text-[12px]">Master-Seite:</span>
        <div className="ml-[18px] w-[228px] h-[20px] bg-[#2e2e2e] flex items-center rounded-[1px]">
          <div className="ml-[6px] w-[18px] h-[13px] bg-white" />
          <span className="ml-[8px] flex-1">Master A</span>
          <div className="w-[17px] h-full bg-[#3e3e3e] flex items-center justify-center"><Caret /></div>
        </div>
      </div>
    </div>
    <div className="mt-[17px] mr-[19px] flex justify-end gap-[7px]">
      <div className="w-[73px] h-[20px] rounded-[2px] bg-[#3c3c3c] border border-[#2c2c2c] flex items-center justify-center">Abbrechen</div>
      <div className="w-[74px] h-[20px] rounded-[2px] bg-[#3c3c3c] border border-[#2c2c2c] flex items-center justify-center">OK</div>
    </div>
  </div>
);

const MENU = ["Datei", "Bearbeiten", "Dokument", "Text", "Tabelle", "Ebene", "Auswählen", "Ansicht", "Fenster", "Hilfe"];

export default function App() {
  return (
    <div className="relative w-[1920px] h-[1080px] overflow-hidden flex flex-col bg-[#333] font-['Liberation_Sans',Arial,sans-serif]">
      <div className="h-[23px] bg-[#101011] flex items-center text-[14.5px] text-[#ececec] shrink-0">
        <FaApple size={17} color="#eee" className="ml-[19px]" />
        <span className="ml-[18px] font-bold">Affinity Publisher</span>
        <div className="ml-[18px] flex gap-[18.3px]">{MENU.map((m) => <span key={m}>{m}</span>)}</div>
      </div>
      <div className="h-[24px] bg-[#3a3a3a] border-t border-[#8a8a8a] flex items-center shrink-0 relative">
        <div className="ml-[8px] flex gap-[8px]">
          <i className="block w-[12px] h-[12px] rounded-full bg-[#e0564f]" />
          <i className="block w-[12px] h-[12px] rounded-full bg-[#dfb53c]" />
          <i className="block w-[12px] h-[12px] rounded-full bg-[#55b94a]" />
        </div>
        <div className="ml-[793px] mb-[2px] text-[12px] text-[#dcdcdc] whitespace-nowrap">Affinity Publisher - &lt;Unbenannt&gt; (67.5%)</div>
      </div>
      <Toolbar />
      <div className="h-[31px] pt-[4px] bg-[#363636] flex items-center shrink-0 text-[12.5px] text-[#e6e6e6]">
        <span className="ml-[12px] w-[81px] whitespace-nowrap">Keine Auswahl</span>
        <CtxBtn className="ml-[15px] w-[177px] h-[20px]">Dokumenteinstellungen...</CtxBtn>
        <CtxBtn className="ml-[4px] w-[168px]">Layoutseite einrichten...</CtxBtn>
        <CtxBtn className="ml-[4px] w-[120px]">Einstellungen...</CtxBtn>
      </div>
      <div className="flex-1 flex min-h-0">
        <Tools />
        <LeftPanel />
        <Center />
        <RightPanel />
      </div>
      <div className="h-[18px] pt-[4px] bg-[#333] flex items-center text-[12.6px] text-[#d4d4d4] shrink-0">
        <svg width="10" height="10" viewBox="0 0 10 10" className="ml-[12px]"><path d="M1 0V10" stroke="#888" /><path d="M9 0V10L2 5Z" fill="#888" /></svg>
        <svg width="8" height="10" viewBox="0 0 8 10" className="ml-[8px]"><path d="M8 0V10L1 5Z" fill="#888" /></svg>
        <span className="ml-[37px] w-[42px] whitespace-nowrap">1 von 4</span>
        <svg width="8" height="11" viewBox="0 0 8 11" className="ml-[30px]"><path d="M0 0V11L8 5.500Z" fill="#eee" /></svg>
        <svg width="10" height="11" viewBox="0 0 10 11" className="ml-[9px]"><path d="M0 0V11L7 5.500Z" fill="#eee" /><path d="M9 0V11" stroke="#eee" /></svg>
        <svg width="10" height="12" viewBox="0 0 10 12" className="ml-[9px]"><rect x="0.500" y="0.500" width="9" height="11" fill="none" stroke="#ccc" /><path d="M2 3H8M2 5H8M2 7H8M2 9H8" stroke="#ccc" /></svg>
        <span className="ml-[18px] whitespace-nowrap"><b className="text-[#eee]">Ziehen</b> = Per Auswahlrahmen markieren. <b className="text-[#eee]">Klick</b> auf Objekt = Objekt auswählen.</span>
      </div>
      <Dialog />
    </div>
  );
}
